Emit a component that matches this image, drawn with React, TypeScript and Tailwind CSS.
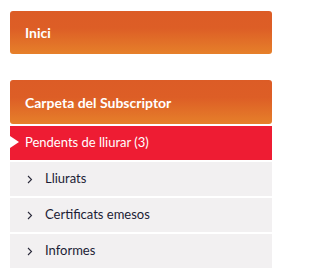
import React from "react";

const Chevron = () => (
  <svg width="6" height="9" viewBox="0 0 6 9" className="shrink-0">
    <path d="M1 1 L4.5 4.5 L1 8" fill="none" stroke="#2a2a3a" strokeWidth="1.1" />
  </svg>
);

const headerCls =
  "w-[262px] rounded-[3px] bg-[linear-gradient(to_bottom,#dc5c26_0%,#dd5e26_40%,#e6802a_100%)] flex items-center pl-[15px] text-white font-bold text-[14px]";

const Item = ({ label }: { label: string }) => (
  <div className="h-[34px] w-[262px] bg-[#f2f0f1] flex items-center pl-[17px] text-[13px] text-[#1c1c35]">
    <Chevron />
    <span className="ml-[12px]">{label}</span>
  </div>
);

export default function App() {
  return (
    <div className="w-[282px] h-[279px] bg-white pl-[10px] pt-[11px] font-['Lato',sans-serif]">
      <div className={`h-[43px] ${headerCls}`}>Inici</div>
      <div className="h-[26px]" />
      <div className={`h-[44px] ${headerCls}`}>Carpeta del Subscriptor</div>
      <div className="flex flex-col gap-[2px] mt-[2px]">
        <div className="relative h-[34px] w-[262px] bg-[#ee1c33] flex items-center pl-[15px] text-white text-[13px]">
          <svg width="9" height="12" viewBox="0 0 9 12" className="absolute left-0 top-[10px]">
            <path d="M0 0 L9 6 L0 12 Z" fill="#ffffff" />
          </svg>
          Pendents de lliurar (3)
        </div>
        <Item label="Lliurats" />
        <Item label="Certificats emesos" />
        <Item label="Informes" />
      </div>
    </div>
  );
}
